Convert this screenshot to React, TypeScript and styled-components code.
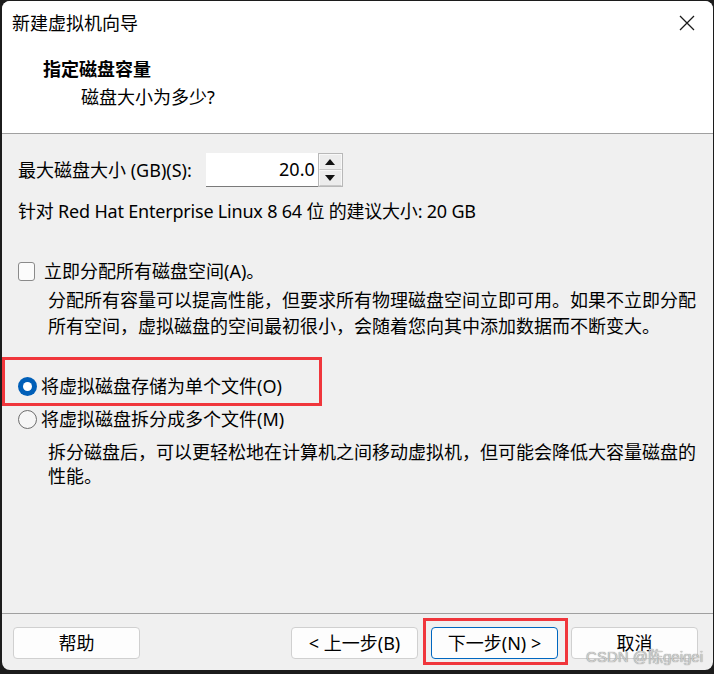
import React from "react";
import styled, { createGlobalStyle } from "styled-components";

const CJK = `"Noto Sans", "Noto Sans CJK SC", sans-serif`;

const GlobalStyle = createGlobalStyle`
  html, body {
    margin: 0;
    padding: 0;
    background: #1c1c1c;
    overflow: hidden;
  }
  * { box-sizing: border-box; }
`;

export default function App() {
  return (
    <>
      <GlobalStyle />
      <Window>
        {/* 标题栏 */}
        <TitleBar>
          <Title>新建虚拟机向导</Title>
          <CloseBtn>
            <svg width="16" height="16" viewBox="0 0 16 16">
              <path d="M1 1 L15 15 M15 1 L1 15" stroke="#1a1a1a" strokeWidth="1.3" fill="none" />
            </svg>
          </CloseBtn>
        </TitleBar>

        <Header>
          <HeaderTitle>指定磁盘容量</HeaderTitle>
          <HeaderSub>磁盘大小为多少?</HeaderSub>
        </Header>

        <Content>
          <SizeRow>
            <Label>最大磁盘大小 (GB)(S):</Label>
            <SpinBox>
              <NumberInput>20.0</NumberInput>
              <Spinner>
                <SpinBtn>
                  <svg width="10" height="6" viewBox="0 0 10 6"><path d="M0 6 L5 0 L10 6 Z" fill="#111" /></svg>
                </SpinBtn>
                <SpinBtn>
                  <svg width="10" height="6" viewBox="0 0 10 6"><path d="M0 0 L5 6 L10 0 Z" fill="#111" /></svg>
                </SpinBtn>
              </Spinner>
            </SpinBox>
          </SizeRow>

          <Recommend>针对 Red Hat Enterprise Linux 8 64 位 的建议大小: 20 GB</Recommend>

          <OptionRow $top={34} $gap={7}>
            <CheckBox />
            <Label>立即分配所有磁盘空间(A)。</Label>
          </OptionRow>
          <Desc $top={3} $lh={26}>
            分配所有容量可以提高性能，但要求所有物理磁盘空间立即可用。如果不立即分配
            <br />
            所有空间，虚拟磁盘的空间最初很小，会随着您向其中添加数据而不断变大。
          </Desc>

          <OptionRow $top={34} $gap={4}>
            <Radio $checked />
            <Label>将虚拟磁盘存储为单个文件(O)</Label>
          </OptionRow>
          <OptionRow $top={7} $gap={4}>
            <Radio />
            <Label>将虚拟磁盘拆分成多个文件(M)</Label>
          </OptionRow>
          <Desc $top={8} $lh={24}>
            拆分磁盘后，可以更轻松地在计算机之间移动虚拟机，但可能会降低大容量磁盘的
            <br />
            性能。
          </Desc>
        </Content>

        <Footer>
          <Button>帮助</Button>
          <Spacer />
          <Button>&lt; 上一步(B)</Button>
          <Button $primary>下一步(N) &gt;</Button>
          <Button>取消</Button>
        </Footer>

        {/* 标注框 */}
        <Mark style={{ left: 0, top: 356, width: 320, height: 49 }} />
        <Mark style={{ left: 421, top: 617, width: 145, height: 47 }} />
        <Watermark>CSDN @陈geigei</Watermark>
      </Window>
    </>
  );
}

const Window = styled("div")`
  position: relative;
  margin: 1px 1px 0 2px;
  width: 711px;
  height: 669px;
  border-radius: 8px;
  overflow: hidden;
  background: #f0f0f0;
  display: flex;
  flex-direction: column;
  font-family: ${CJK};
  color: #000;
`;

const TitleBar = styled("div")`
  height: 43px;
  background: #fff;
  display: flex;
  align-items: center;
  justify-content: space-between;
  padding: 0 18px 0 10px;
`;

const Title = styled("span")`
  font-size: 18px;
  line-height: 22px;
`;

const CloseBtn = styled("div")`
  width: 16px;
  height: 16px;
  display: flex;
`;

const Header = styled("div")`
  height: 90px;
  background: #fff;
  border-bottom: 1px solid #a0a0a0;
  padding-top: 12px;
`;

const HeaderTitle = styled("div")`
  font-size: 18px;
  font-weight: 700;
  line-height: 26px;
  padding-left: 41px;
`;

const HeaderSub = styled("div")`
  font-size: 18px;
  line-height: 26px;
  margin-top: 2px;
  padding-left: 79px;
`;

const Content = styled("div")`
  flex: 1;
  padding-left: 16px;
  font-size: 18px;
`;

const SizeRow = styled("div")`
  margin-top: 19px;
  height: 34px;
  display: flex;
  align-items: center;
`;

const Label = styled("span")`
  font-size: 18px;
  line-height: 26px;
  white-space: nowrap;
`;

const SpinBox = styled("div")`
  display: flex;
  margin-left: 14px;
  height: 34px;
`;

const NumberInput = styled("div")`
  width: 112px;
  height: 34px;
  background: #fff;
  border-bottom: 1px solid #7a7a7a;
  font-size: 18px;
  line-height: 33px;
  text-align: right;
  padding-right: 3px;
`;

const Spinner = styled("div")`
  width: 25px;
  height: 34px;
  display: flex;
  flex-direction: column;
  border: 1px solid #b8b8b8;
  background: #e6e6e6;
`;

const SpinBtn = styled("div")`
  flex: 1;
  display: flex;
  align-items: center;
  justify-content: center;
  border: 1px solid #f8f8f8;
  border-bottom-color: #c8c8c8;
  background: #ececec;
`;

const Recommend = styled("div")`
  margin-top: 11px;
  font-size: 18px;
  line-height: 26px;
  letter-spacing: -0.2px;
  white-space: nowrap;
`;

const OptionRow = styled("div")<{ $top: number; $gap: number }>`
  margin-top: ${(p) => p.$top}px;
  height: 26px;
  display: flex;
  align-items: center;
  gap: ${(p) => p.$gap}px;
`;

const CheckBox = styled("span")`
  width: 17px;
  height: 19px;
  margin-right: 2px;
  border: 1px solid #8a8a8a;
  border-radius: 3px;
  background: #fbfbfb;
`;

const Radio = styled("span")<{ $checked?: boolean }>`
  width: 19px;
  height: 19px;
  border-radius: 50%;
  flex-shrink: 0;
  background: ${(p) => (p.$checked ? "#005fb8" : "#f6f6f6")};
  border: ${(p) => (p.$checked ? "none" : "1px solid #6e6e6e")};
  display: flex;
  align-items: center;
  justify-content: center;
  &::after {
    content: "";
    display: ${(p) => (p.$checked ? "block" : "none")};
    width: 9px;
    height: 9px;
    border-radius: 50%;
    background: #fff;
  }
`;

const Desc = styled("div")<{ $top: number; $lh: number }>`
  margin-top: ${(p) => p.$top}px;
  padding-left: 30px;
  font-size: 18px;
  line-height: ${(p) => p.$lh}px;
  white-space: nowrap;
`;

const Footer = styled("div")`
  height: 57px;
  border-top: 1px solid #a0a0a0;
  display: flex;
  align-items: flex-start;
  padding: 13px 15px 0 11px;
  gap: 13px;
`;

const Spacer = styled("div")`
  flex: 1;
`;

const Button = styled("div")<{ $primary?: boolean }>`
  width: 127px;
  height: 32px;
  background: #fdfdfd;
  border: 1px solid ${(p) => (p.$primary ? "#0067c0" : "#d0d0d0")};
  border-radius: 4px;
  font-size: 18px;
  line-height: 30px;
  text-align: center;
  white-space: nowrap;
`;

const Mark = styled("div")`
  position: absolute;
  border: 3px solid #f0363c;
  pointer-events: none;
`;

const Watermark = styled("div")`
  position: absolute;
  right: 10px;
  bottom: 4px;
  font-family: "Liberation Sans", "Noto Sans CJK SC", sans-serif;
  font-size: 15px;
  color: #cfcfcf;
  text-shadow: 0 0 1px #6a6a6a;
  white-space: nowrap;
`;
